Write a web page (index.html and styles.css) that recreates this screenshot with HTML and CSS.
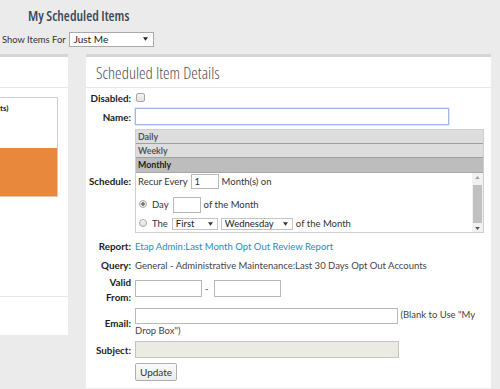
FILE: index.html
```html
<!DOCTYPE html>
<html>
<head>
<meta charset="utf-8">
<link rel="stylesheet" href="styles.css">
</head>
<body>
<div class="page">
  <header class="top">
    <h1 class="title">My Scheduled Items</h1>
    <div class="filter">
      <span class="filter-label">Show Items For</span>
      <div class="sel sel-top"><span>Just Me</span><svg class="caret" width="5" height="4" viewBox="0 0 6 4"><path d="M0 0h6L3 4z" fill="#222"/></svg></div>
    </div>
  </header>
  <div class="panels">
    <aside class="panel left">
      <div class="left-head"></div>
      <div class="left-body">
        <div class="lbox"><b>ts)</b></div>
        <div class="lorange"></div>
      </div>
      <div class="left-foot"></div>
    </aside>
    <section class="panel right">
      <h2 class="phead">Scheduled Item Details</h2>
      <div class="form">
        <div class="row r-disabled">
          <label class="lbl">Disabled:</label>
          <div class="cell"><input type="checkbox" class="chk"></div>
        </div>
        <div class="row r-name">
          <label class="lbl">Name:</label>
          <div class="cell"><div class="inp inp-name"></div></div>
        </div>
        <div class="row r-sched">
          <label class="lbl">Schedule:</label>
          <div class="cell">
            <div class="sched">
              <div class="tab">Daily</div>
              <div class="tab">Weekly</div>
              <div class="tab tab-on">Monthly</div>
              <div class="sched-body">
                <div class="sched-content">
                  <div class="srow s1">Recur Every <div class="inp inp-small">1</div> Month(s) on</div>
                  <div class="srow s2"><span class="radio on"></span>Day <div class="inp inp-day"></div> of the Month</div>
                  <div class="srow s3"><span class="radio"></span>The <div class="sel sel-first"><span>First</span><svg class="caret" width="5" height="4" viewBox="0 0 6 4"><path d="M0 0h6L3 4z" fill="#333"/></svg></div><div class="sel sel-wed"><span>Wednesday</span><svg class="caret" width="5" height="4" viewBox="0 0 6 4"><path d="M0 0h6L3 4z" fill="#333"/></svg></div> of the Month</div>
                </div>
                <div class="sbar">
                  <svg class="arr" width="5" height="3" viewBox="0 0 6 4"><path d="M0 4h6L3 0z" fill="#a0a0a0"/></svg>
                  <div class="thumb"></div>
                  <svg class="arr" width="5" height="3" viewBox="0 0 6 4"><path d="M0 0h6L3 4z" fill="#505050"/></svg>
                </div>
              </div>
            </div>
          </div>
        </div>
        <div class="row r-report">
          <label class="lbl">Report:</label>
          <div class="cell"><a class="link">Etap Admin:Last Month Opt Out Review Report</a></div>
        </div>
        <div class="row r-query">
          <label class="lbl">Query:</label>
          <div class="cell txt">General - Administrative Maintenance:Last 30 Days Opt Out Accounts</div>
        </div>
        <div class="row r-valid">
          <label class="lbl">Valid From:</label>
          <div class="cell valid-cell"><div class="inp inp-date"></div><span class="dash">-</span><div class="inp inp-date"></div></div>
        </div>
        <div class="row r-email">
          <label class="lbl">Email:</label>
          <div class="cell txt email-cell"><div class="inp inp-email"></div> (Blank to Use "My Drop Box")</div>
        </div>
        <div class="row r-subject">
          <label class="lbl">Subject:</label>
          <div class="cell"><div class="inp inp-subject"></div></div>
        </div>
        <div class="row r-update">
          <span class="lbl"></span>
          <div class="cell"><button class="btn">Update</button></div>
        </div>
      </div>
    </section>
  </div>
</div>
</body>
</html>
```
FILE: styles.css
```css
* { box-sizing: border-box; }
html, body { margin: 0; padding: 0; }
body {
  background: #ebebeb;
  font-family: Lato, "Open Sans", sans-serif;
  font-size: 9.5px;
  color: #333;
  width: 500px;
  height: 389px;
  overflow: hidden;
}
.top { height: 54px; }
.title {
  margin: 0;
  padding: 6px 0 0 28px;
  height: 29px;
  font-family: "Open Sans", sans-serif;
  font-stretch: 75%;
  font-weight: 600;
  font-size: 13.8px;
  color: #3b4858;
}
.filter { display: flex; align-items: center; padding-left: 2px; height: 16px; margin-top: 2px; }
.filter-label { font-size: 9.4px; color: #333; margin-right: 3px; }
.sel {
  display: inline-flex;
  align-items: center;
  justify-content: space-between;
  background: #fff;
  border: 1px solid #a9a9a9;
  color: #222;
}
.sel-top { width: 85px; height: 15px; padding: 0 5px 0 4px; font-size: 10px; }
.caret { display: block; }

.panels { display: flex; gap: 18px; align-items: flex-start; }
.panel { background: #fff; border-top: 3px solid #d5d5d5; }
.left { width: 68px; height: 281px; display: flex; flex-direction: column; }
.left-head { height: 31px; border-bottom: 1px solid #e8e8e8; flex: none; }
.left-body { padding-top: 9px; height: 208px; flex: none; }
.lbox {
  width: 59px; height: 51px; margin-left: -1px;
  border: 1px solid #cfcfcf; border-bottom: none;
  font-size: 8px; padding: 5px 0 0 0; color: #222;
}
.lorange { width: 59px; height: 49px; background: #e8883c; margin-left: -1px; border: 1px solid #e0c7b3; border-top: none; }
.left-foot { border-top: 1px solid #e8e8e8; flex: 1; }

.right { width: 405px; }
.phead {
  margin: 0;
  height: 31px;
  border-bottom: 1px solid #e8e8e8;
  font-family: "Open Sans", sans-serif;
  font-stretch: 75%;
  font-weight: 300;
  font-size: 16.6px;
  color: #505050;
  padding: 4px 0 0 10px;
}
.form { padding: 3px 0 7px 0; }
.row { display: flex; align-items: center; }
.lbl {
  width: 47px; flex: none;
  text-align: right;
  font-weight: bold;
  font-size: 9.8px;
  color: #222;
  padding-right: 2px;
  line-height: 14px;
}
.cell { margin-left: 2px; display: flex; align-items: center; }
.txt { color: #444; }
.r-disabled { height: 13px; }
.r-name { margin-top: 4px; }
.r-sched { margin-top: 4px; }
.r-report { margin-top: 6px; height: 14px; }
.r-query { margin-top: 5px; height: 14px; }
.r-valid { margin-top: 3px; }
.r-valid .lbl { line-height: 15px; }
.valid-cell { margin-bottom: 3px; }
.r-email { margin-top: 3px; }
.r-subject { margin-top: 4px; }
.r-update { margin-top: 5px; }

.chk {
  appearance: none; -webkit-appearance: none;
  width: 9px; height: 9px; margin: 0 0 0 1px;
  border: 1px solid #a8a8a8; border-radius: 2px;
  background: linear-gradient(#f4f4f4, #e2e2e2);
}
.inp { background: #fff; border: 1px solid #b9b9b9; height: 16px; }
.inp-name { width: 314px; height: 17px; border-color: #9fb7e6; box-shadow: 0 0 0 0.5px #c6d6f4; }
.sched {
  width: 349px; height: 104px; overflow: hidden;
  border: 1px solid #cfcfcf;
  display: flex; flex-direction: column;
}
.tab {
  height: 14px; flex: none;
  background: #dddddd;
  border-bottom: 1px solid #9f9f9f;
  font-size: 8.8px; font-weight: bold; color: #555;
  padding-left: 2px; line-height: 13px;
}
.tab-on { background: #bdbdbd; color: #1d1d1d; border-bottom: 1px solid #a8a8a8; height: 15px; }
.sched-body { display: flex; flex: 1; min-height: 0; }
.sched-content { flex: 1; padding: 1px 0 0 2px; overflow: hidden; }
.srow { display: flex; align-items: center; white-space: nowrap; color: #333; }
.s1 { height: 15px; }
.s2 { height: 17px; margin-top: 7px; }
.s3 { height: 13px; margin-top: 4px; }
.inp-small { width: 28px; height: 15px; margin: 0 3px; padding-left: 3px; line-height: 13px; }
.inp-day { width: 28px; height: 16px; margin: 0 3px 0 4px; }
.radio {
  display: inline-block; width: 8px; height: 8px; border-radius: 50%;
  border: 1px solid #aaa; background: linear-gradient(#f6f6f6, #dedede);
  margin: 0 5px 0 1px; position: relative; top: -1px;
}
.radio.on { background: radial-gradient(circle, #777 0 1.5px, #eee 2px); }
.sel-first { width: 46px; height: 12px; margin: 0 3px 0 4px; padding: 0 4px 0 3px; border-color: #c4c4c4; }
.sel-wed { width: 72px; height: 12px; margin: 0 3px 0 0; padding: 0 4px 0 3px; border-color: #c4c4c4; }
.sbar {
  width: 11px; flex: none; background: #f1f1f1;
  display: flex; flex-direction: column; align-items: center;
  padding: 3px 0 2px;
}
.thumb { width: 9px; height: 38px; background: #c1c1c1; margin: 6px 0 auto; }
.arr { flex: none; }
.sbar .arr:last-child { margin-top: auto; }

.link { color: #2e8ab5; text-decoration: none; }
.inp-date { width: 67px; height: 17px; }
.dash { margin: 0 5px 0 3px; color: #444; }
.email-cell { display: block; width: 340px; line-height: 13px; }
.inp-email { display: inline-block; vertical-align: top; width: 263px; height: 16px; }
.inp-subject { width: 264px; height: 17px; background: #ebebe4; border-color: #c6c6c0; }
.btn {
  font-family: Lato, sans-serif; font-size: 10px; color: #333;
  height: 18px; width: 42px; padding: 0;
  background: linear-gradient(#fafafa, #ececec);
  border: 1px solid #b0b0b0; border-radius: 2px;
}
```
